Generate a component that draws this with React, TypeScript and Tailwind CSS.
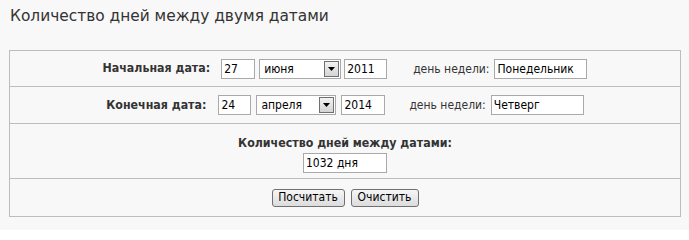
import React from 'react';

const font = { fontFamily: 'Tahoma, "DejaVu Sans Condensed", "DejaVu Sans", sans-serif' };

const Field: React.FC<{ value: string; w: string }> = ({ value, w }) => (
  <div className={`h-[20px] ${w} border border-[#a9a9a9] bg-white px-[2px] text-[12px] leading-[18px] text-black`}>{value}</div>
);

const MonthSelect: React.FC<{ value: string; w: string }> = ({ value, w }) => (
  <div className={`h-[20px] ${w} border border-[#a9a9a9] bg-white flex items-center text-[12px] text-black`}>
    <span className="flex-1 pl-[4px]">{value}</span>
    <span className="mr-[1px] h-[16px] w-[15px] border border-[#707070] bg-gradient-to-b from-[#f2f2f2] to-[#d4d4d4] flex items-center justify-center">
      <svg width="7" height="4" viewBox="0 0 7 4"><path d="M0 0h7L3.5 4z" fill="#000" /></svg>
    </span>
  </div>
);

const Btn: React.FC<{ label: string; w: string }> = ({ label, w }) => (
  <button className={`h-[18px] ${w} rounded-[3px] border border-[#707070] bg-gradient-to-b from-[#f6f6f6] to-[#dcdcdc] text-[12px] leading-[15px] text-black`}>
    {label}
  </button>
);

export default function App() {
  return (
    <div className="w-[689px] h-[230px] bg-[#f8f8f8] text-[#333]" style={font}>
      <h1 className="pl-[10px] pt-[5px] h-[50px] text-[15.4px] text-[#333]" style={{ fontFamily: '"DejaVu Sans", Verdana, sans-serif' }}>
        Количество дней между двумя датами
      </h1>
      <div className="ml-[9px] w-[672px] border border-[#bdbdbd]">
        <div className="h-[36px] flex items-center justify-center border-b border-[#bdbdbd]">
          <span className="font-bold text-[12.3px] mr-[11px]">Начальная дата:</span>
          <Field value="27" w="w-[34px]" />
          <div className="w-[4px]" />
          <MonthSelect value="июня" w="w-[82px]" />
          <div className="w-[3px]" />
          <Field value="2011" w="w-[43px]" />
          <span className="ml-[26px] mr-[5px] text-[12px]">день недели:</span>
          <Field value="Понедельник" w="w-[93px]" />
        </div>
        <div className="h-[37px] flex items-center justify-center border-b border-[#bdbdbd]">
          <span className="font-bold text-[12.3px] mr-[12px]">Конечная дата:</span>
          <Field value="24" w="w-[33px]" />
          <div className="w-[5px]" />
          <MonthSelect value="апреля" w="w-[80px]" />
          <div className="w-[5px]" />
          <Field value="2014" w="w-[44px]" />
          <span className="ml-[24px] mr-[5px] text-[12px]">день недели:</span>
          <Field value="Четверг" w="w-[93px]" />
        </div>
        <div className="h-[55px] flex flex-col items-center border-b border-[#bdbdbd] pt-[11px]">
          <span className="font-bold text-[12.3px] leading-[16px]">Количество дней между датами:</span>
          <div className="mt-[2px]">
            <Field value="1032 дня" w="w-[84px]" />
          </div>
        </div>
        <div className="h-[37px] flex items-center justify-center gap-[6px]">
          <Btn label="Посчитать" w="w-[73px]" />
          <Btn label="Очистить" w="w-[68px]" />
        </div>
      </div>
    </div>
  );
}
